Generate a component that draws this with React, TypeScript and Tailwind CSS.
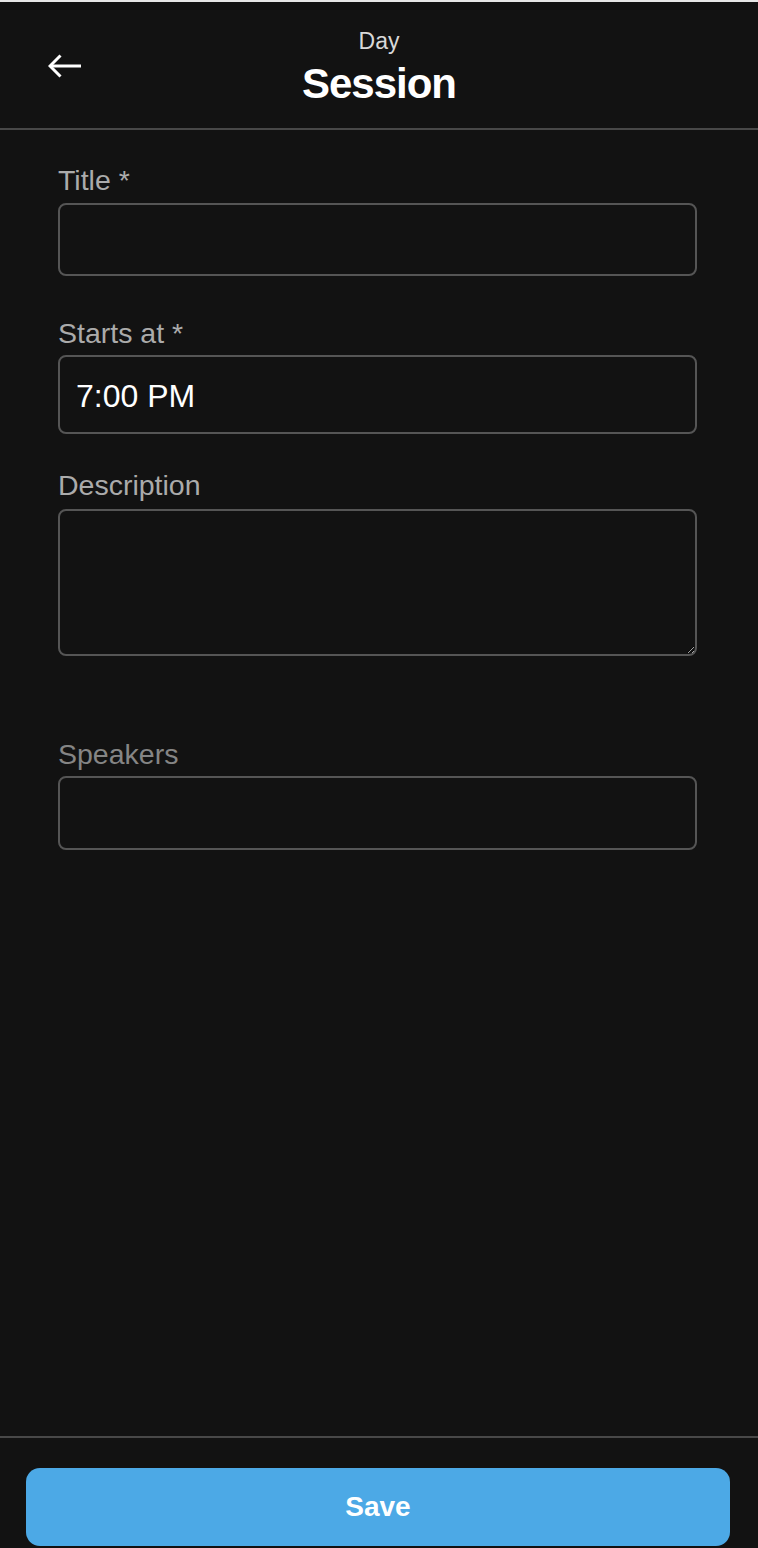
import React from 'react'

const labelBase = 'block text-[28.5px] leading-[32px]'
const fieldBase =
  'block w-full rounded-lg border-2 border-[#555555] bg-[#121212] px-4 text-[32px] text-white outline-none'

function BackArrow() {
  return (
    <svg width="34" height="26" viewBox="0 0 34 26" fill="none" aria-hidden="true">
      <path d="M12.5 1.5 2 12 12.5 22.5" stroke="white" strokeWidth="3" strokeLinejoin="miter" />
      <path d="M2.5 12H33" stroke="white" strokeWidth="3" />
    </svg>
  )
}

export default function App() {
  return (
    <div
      className="flex h-[1548px] w-[758px] flex-col overflow-hidden bg-[#121212]"
      style={{ fontFamily: '"Liberation Sans", Arial, sans-serif' }}
    >
      {/* top strip */}
      <div className="h-[2px] bg-[#e6e6e6]" />

      {/* Header */}
      <header className="grid grid-cols-[1fr_auto_1fr] border-b-2 border-[#484848] pt-[26px] pb-[20px]">
        <button aria-label="Back" className="mt-[26px] self-start justify-self-start pl-[48px]">
          <BackArrow />
        </button>
        <div className="flex flex-col items-center">
          <span className="text-[23px] leading-[26px] text-[#d8d8d8]">Day</span>
          <h1 className="mt-[6px] text-[42px] font-bold leading-[48px] tracking-[-1px] text-white">
            Session
          </h1>
        </div>
        <div />
      </header>

      {/* Form */}
      <main className="flex-1 pl-[58px] pr-[61px]">
        <label className={`${labelBase} mt-[34px] text-[#ababab]`}>Title *</label>
        <input className={`${fieldBase} mt-[7px] h-[73px]`} />

        <label className={`${labelBase} mt-[41px] text-[#ababab]`}>Starts at *</label>
        <input className={`${fieldBase} mt-[6px] h-[79px] pt-[3px]`} defaultValue="7:00 PM" />

        <label className={`${labelBase} mt-[35px] text-[#ababab]`}>Description</label>
        <textarea
          className={`${fieldBase} mt-[8px] h-[147px] resize-y py-3 [color-scheme:dark]`}
        />

        <label className={`${labelBase} mt-[82px] text-[#858585]`}>Speakers</label>
        <input className={`${fieldBase} mt-[6px] h-[74px]`} />
      </main>

      {/* Footer */}
      <footer className="border-t-2 border-[#484848] pl-[26px] pr-[28px] pt-[30px] pb-[2px]">
        <button className="flex h-[78px] w-full items-center justify-center rounded-[14px] bg-[#4ca9e6] text-[28px] font-bold text-white">
          Save
        </button>
      </footer>
    </div>
  )
}
